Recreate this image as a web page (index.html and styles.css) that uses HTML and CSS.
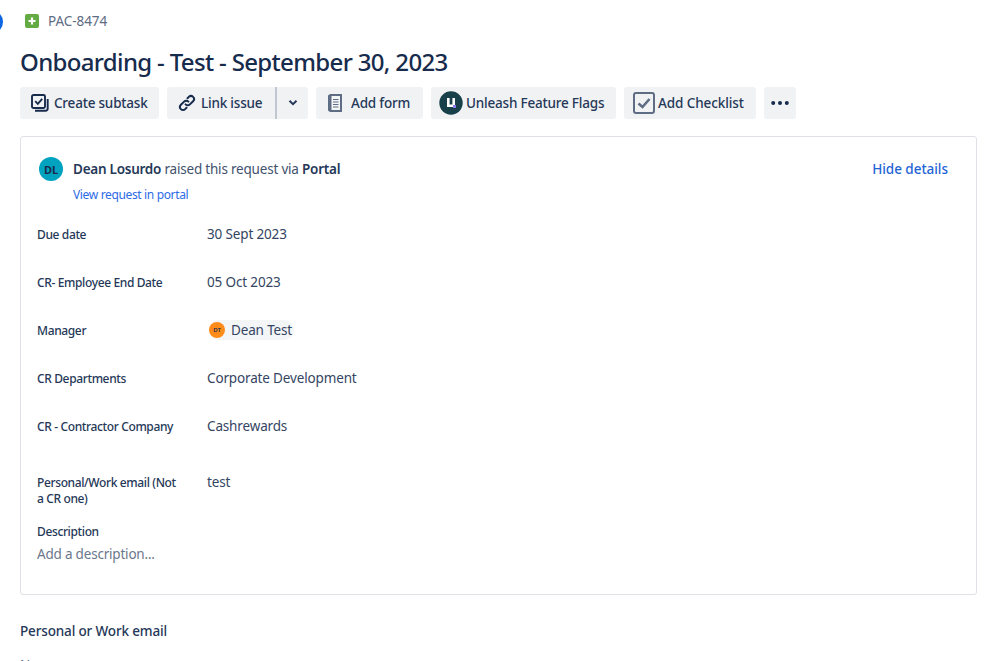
FILE: index.html
```html
<!DOCTYPE html>
<html lang="en">
<head>
    <meta charset="UTF-8">
    <meta name="viewport" content="width=device-width, initial-scale=1.0">
    <title>PAC-8474</title>
    <link rel="stylesheet" href="styles.css">
</head>
<body>

    <!-- Sidebar toggle, mostly cut off by the window edge -->
    <div class="side-toggle"></div>

    <div class="issue">
        <div class="breadcrumb">
            <svg class="type-icon" width="14" height="14" viewBox="0 0 14 14">
                <rect width="14" height="14" rx="2" fill="#65ab43"/>
                <path d="M7 3.5v7M3.5 7h7" stroke="#fff" stroke-width="2.2"/>
            </svg>
            <span>PAC-8474</span>
        </div>

        <h1>Onboarding - Test - September 30, 2023</h1>

        <div class="actions">
            <button class="btn btn-subtask">
                <svg width="18" height="18" viewBox="0 0 18 18" fill="none" stroke="#172b4d" stroke-width="1.9">
                    <rect x="1" y="1" width="13" height="13" rx="1.5"/>
                    <path d="M4.2 7.2l2.6 2.6 4.4-5"/>
                    <path d="M4 16.7h10.5a2.2 2.2 0 0 0 2.2-2.2V5"/>
                </svg>
                Create subtask
            </button>
            <div class="btn-group">
                <button class="btn btn-link">
                    <svg width="18" height="18" viewBox="0 0 18 18" fill="none" stroke="#172b4d" stroke-width="2" stroke-linecap="round">
                        <path d="M7.6 10.4a3 3 0 0 0 4.3 0l3.2-3.2a3 3 0 0 0-4.3-4.3L9.5 4.2"/>
                        <path d="M10.4 7.6a3 3 0 0 0-4.3 0l-3.2 3.2a3 3 0 0 0 4.3 4.3l1.3-1.3"/>
                    </svg>
                    Link issue
                </button>
                <button class="btn btn-caret">
                    <svg width="10" height="8" viewBox="0 0 10 8" fill="none" stroke="#253858" stroke-width="2">
                        <path d="M1.5 1.8L5 5.2l3.5-3.4"/>
                    </svg>
                </button>
            </div>
            <button class="btn btn-form">
                <svg width="16" height="20" viewBox="0 0 16 20">
                    <path d="M1 2.5L3 1h12v18H3l-2-1.5z" fill="#5e6c84"/>
                    <rect x="4.5" y="3" width="8.5" height="14" fill="#f4f5f7"/>
                    <path d="M6 6.5h5.5M6 9h5.5M6 11.5h5.5M6 14h5.5" stroke="#5e6c84"/>
                </svg>
                Add form
            </button>
            <button class="btn btn-flags">
                <svg width="24" height="24" viewBox="0 0 24 24">
                    <circle cx="12" cy="12" r="11.7" fill="#17404a"/>
                    <path d="M8 7v9h8V7h-2.6v6.4h-2.8V7z" fill="#fff"/>
                    <rect x="14" y="14" width="3" height="3" fill="#8a7cf0"/>
                </svg>
                Unleash Feature Flags
            </button>
            <button class="btn btn-checklist">
                <svg width="22" height="22" viewBox="0 0 22 22" fill="none">
                    <rect x="1" y="1" width="20" height="20" rx="2" stroke="#5e6c84" stroke-width="2"/>
                    <path d="M5.5 11.5l4 3.5 7-8" stroke="#5e6c84" stroke-width="2.6"/>
                </svg>
                Add Checklist
            </button>
            <button class="btn btn-more">
                <svg width="18" height="4" viewBox="0 0 18 4" fill="#172b4d">
                    <circle cx="2.2" cy="2" r="2"/>
                    <circle cx="9" cy="2" r="2"/>
                    <circle cx="15.8" cy="2" r="2"/>
                </svg>
            </button>
        </div>

        <div class="request-card">
            <div class="request-head">
                <div class="avatar avatar-dl">DL</div>
                <div class="request-info">
                    <div class="raised"><b>Dean Losurdo</b> raised this request via <b>Portal</b></div>
                    <a class="portal-link" href="#">View request in portal</a>
                </div>
                <a class="hide-details" href="#">Hide details</a>
            </div>

            <div class="field field-due">
                <div class="field-label">Due date</div>
                <div class="field-value">30 Sept 2023</div>
            </div>
            <div class="field">
                <div class="field-label">CR- Employee End Date</div>
                <div class="field-value">05 Oct 2023</div>
            </div>
            <div class="field">
                <div class="field-label">Manager</div>
                <div class="field-value">
                    <span class="user-chip"><span class="avatar avatar-dt">DT</span>Dean Test</span>
                </div>
            </div>
            <div class="field">
                <div class="field-label">CR Departments</div>
                <div class="field-value">Corporate Development</div>
            </div>
            <div class="field">
                <div class="field-label">CR - Contractor Company</div>
                <div class="field-value">Cashrewards</div>
            </div>
            <div class="field field-email">
                <div class="field-label">Personal/Work email (Not a CR one)</div>
                <div class="field-value">test</div>
            </div>

            <div class="description">
                <div class="field-label">Description</div>
                <div class="placeholder">Add a description...</div>
            </div>
        </div>

        <h2>Personal or Work email</h2>
        <div class="none-value">None</div>
    </div>

</body>
</html>
```

FILE: styles.css
```css
html, body {
    height: 100%;
    overflow: hidden;
}
body {
    font-family: "Noto Sans", Arial, sans-serif;
    font-size: 14px;
    color: #172b4d;
    background-color: white;
    margin: 0;
}
button {
    font-family: inherit;
}
a {
    text-decoration: none;
}
.side-toggle {
    position: absolute;
    left: -21px;
    top: 10px;
    width: 24px;
    height: 24px;
    border-radius: 50%;
    background-color: #0c66e4;
}
.issue {
    width: 957px;
    padding-left: 20px;
}
.breadcrumb {
    display: flex;
    align-items: center;
    height: 20px;
    padding: 11px 0 0 5px;
    color: #5e6c84;
    font-size: 13.5px;
    letter-spacing: -0.05px;
}
.type-icon {
    margin-right: 9px;
}
h1 {
    margin: 15px 0 0;
    font-size: 24px;
    font-weight: 500;
    line-height: 32px;
    letter-spacing: -0.66px;
    color: #172b4d;
}
.actions {
    display: flex;
    gap: 8px;
    margin-top: 9px;
}
.btn {
    display: flex;
    align-items: center;
    height: 32px;
    padding: 0 12px 0 11px;
    border: none;
    border-radius: 3px;
    background-color: #f1f2f4;
    color: #253858;
    font-size: 13.5px;
    font-weight: 500;
    letter-spacing: -0.2px;
    white-space: nowrap;
    cursor: pointer;
}
.btn svg {
    flex-shrink: 0;
}
.btn-subtask {
    width: 139px;
    gap: 5px;
}
.btn-group {
    display: flex;
}
.btn-link {
    width: 108px;
    gap: 5px;
    border-radius: 3px 0 0 3px;
}
.btn-caret {
    width: 33px;
    justify-content: center;
    padding: 0;
    border-left: 2px solid #c1c7d0;
    border-radius: 0 3px 3px 0;
}
.btn-form {
    width: 107px;
    gap: 8px;
}
.btn-flags {
    width: 185px;
    gap: 3px;
    padding-left: 8px;
}
.btn-checklist {
    width: 132px;
    gap: 3px;
    padding-left: 9px;
    letter-spacing: -0.1px;
}
.btn-more {
    width: 32px;
    padding: 0;
    justify-content: center;
}
.request-card {
    height: 457px;
    margin-top: 17px;
    padding: 0 16px;
    border: 1px solid #dfe1e6;
    border-radius: 3px;
}
.request-head {
    display: flex;
    align-items: flex-start;
    padding: 20px 12px 0 2px;
}
.avatar {
    display: flex;
    align-items: center;
    justify-content: center;
    border-radius: 50%;
    font-weight: 600;
}
.avatar-dl {
    width: 24px;
    height: 24px;
    background-color: #00a3bf;
    color: #172b4d;
    font-size: 11px;
    font-weight: 700;
}
.request-info {
    flex: 1;
    margin-left: 10px;
}
.raised {
    line-height: 24px;
    font-size: 13.5px;
    letter-spacing: -0.2px;
    color: #42526e;
}
.raised b {
    font-weight: 600;
    letter-spacing: -0.25px;
    color: #253858;
}
.portal-link {
    display: block;
    margin-top: 6px;
    font-size: 12px;
    letter-spacing: -0.35px;
    line-height: 16px;
    color: #2e6be6;
}
.hide-details {
    line-height: 24px;
    font-size: 13.5px;
    font-weight: 500;
    letter-spacing: -0.03px;
    color: #1f65d6;
}
.field {
    display: flex;
    align-items: flex-start;
    height: 48px;
}
.field-due {
    margin-top: 24px;
}
.field-label {
    width: 144px;
    margin-right: 26px;
    font-size: 12px;
    font-weight: 500;
    letter-spacing: -0.37px;
    line-height: 16px;
    color: #253858;
}
.field-value {
    font-size: 13.5px;
    letter-spacing: -0.15px;
    line-height: 20px;
    margin-top: -3px;
    color: #344563;
}
.field-email {
    height: auto;
    margin-top: 8px;
}
.user-chip {
    display: inline-flex;
    align-items: center;
    vertical-align: top;
    height: 20px;
    padding: 0 2px 0 0;
    margin-left: 2px;
    border-radius: 10px;
    background-color: #f4f5f7;
}
.avatar-dt {
    width: 16px;
    height: 16px;
    margin-right: 6px;
    background-color: #ff8b1a;
    color: #172b4d;
    font-size: 6px;
}
.description {
    margin-top: 17px;
}
.placeholder {
    margin-top: 4px;
    font-size: 13.5px;
    letter-spacing: -0.2px;
    line-height: 20px;
    color: #6b778c;
}
h2 {
    margin: 28px 0 0;
    font-size: 13.5px;
    font-weight: 500;
    line-height: 16px;
    letter-spacing: -0.15px;
    color: #253858;
}
.none-value {
    margin-top: 16px;
    font-size: 13.5px;
    line-height: 20px;
    color: #5e6c84;
}
```
